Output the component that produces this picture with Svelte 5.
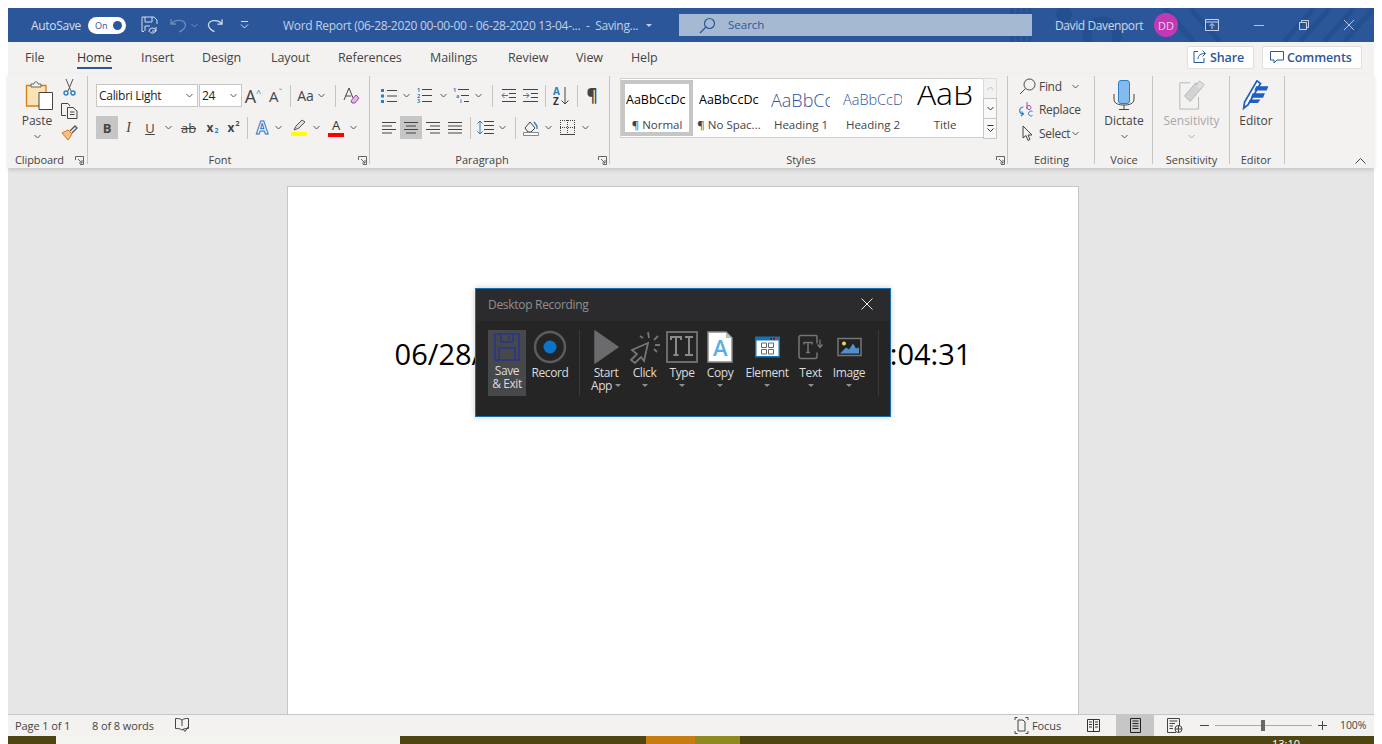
<script>
	const tabs = [
		{ name: 'File', w: 52 },
		{ name: 'Home', w: 64 },
		{ name: 'Insert', w: 61 },
		{ name: 'Design', w: 69 },
		{ name: 'Layout', w: 67 },
		{ name: 'References', w: 92 },
		{ name: 'Mailings', w: 78 },
		{ name: 'Review', w: 68 },
		{ name: 'View', w: 55 },
		{ name: 'Help', w: 40 }
	];
	const samples = [
		{ text: 'AaBbCcDc', name: '¶ Normal', kind: 'normal sel' },
		{ text: 'AaBbCcDc', name: '¶ No Spac...', kind: 'normal' },
		{ text: 'AaBbCc', name: 'Heading 1', kind: 'h1' },
		{ text: 'AaBbCcD', name: 'Heading 2', kind: 'h2' },
		{ text: 'AaB', name: 'Title', kind: 'title' }
	];
</script>

{#snippet chev(color = '#555')}
	<svg class="chev" width="7" height="5" viewBox="0 0 7 5"><path d="M.5 1 3.5 4 6.5 1" fill="none" stroke={color}/></svg>
{/snippet}

{#snippet launcher()}
	<svg class="launch" width="9" height="9" viewBox="0 0 9 9"><path d="M.5 4V.5H8.5V8.5H5M3 3 7 7M7 4V7H4" fill="none" stroke="#666"/></svg>
{/snippet}

{#snippet lines(kind)}
	<svg width="16" height="14" viewBox="0 0 16 14" fill="none" stroke="#444">
		{#if kind === 'left'}<path d="M1 1.5H15M1 5H11M1 8.5H15M1 12H11"/>
		{:else if kind === 'center'}<path d="M1 1.5H15M3 5H13M1 8.5H15M3 12H13"/>
		{:else if kind === 'right'}<path d="M1 1.5H15M5 5H15M1 8.5H15M5 12H15"/>
		{:else}<path d="M1 1.5H15M1 5H15M1 8.5H15M1 12H15"/>{/if}
	</svg>
{/snippet}

<div class="window">
	<header class="titlebar">
		<svg class="pattern" width="480" height="34" viewBox="0 0 480 34" fill="none" stroke="#24508f">
			<path d="M118 0V34M124 0V34M130 0V34M136 0V34" stroke-width="3"/>
			<circle cx="170" cy="6" r="8" fill="#24508f" stroke="none"/>
			<circle cx="208" cy="28" r="15" stroke-width="9"/>
			<path d="M270 0 300 34M296 0 326 34M390 34 420 0M406 34 436 0M430 34 460 0M450 34 480 0" stroke-width="5"/>
		</svg>
		<div class="qat">
			<span class="autosave">AutoSave</span>
			<span class="toggle"><b>On</b><i></i></span>
			<svg class="q-save" width="17" height="18" viewBox="0 0 17 18" fill="none" stroke="#d5deeb"><path d="M3 15.5H1V1H13L16 4V8M4 1V6H11V1M4 15V10H9M8 16a3.5 3.5 0 0 1 7-1M15 11V15H11M15 14a3.5 3.5 0 0 1-6 2"/></svg>
			<svg class="q-undo" width="17" height="16" viewBox="0 0 17 16" fill="none" stroke="#6d8cbc" stroke-width="1.3"><path d="M1 2V7H6M1.500 6.500C5 2 15 2 15.500 8 15.500 11 12 14 9 15"/></svg>
			<span class="q-c1">{@render chev('#6d8cbc')}</span>
			<svg class="q-redo" width="16" height="16" viewBox="0 0 17 16" fill="none" stroke="#d5deeb" stroke-width="1.3"><path d="M16 2V7H11M15.500 6.500C12 2 2 2 1.500 8 1.500 11 5 14 8 15"/></svg>
			<svg class="q-more" width="9" height="8" viewBox="0 0 9 8" fill="none" stroke="#d5deeb"><path d="M1 .5H8M1 3.500 4.500 7 8 3.500"/></svg>
			<span class="doc-title">Word Report (06-28-2020 00-00-00 - 06-28-2020 13-04-...&nbsp; -&nbsp; Saving...</span>
			<span class="title-caret"></span>
		</div>
		<div class="search">
			<svg width="17" height="17" viewBox="0 0 17 17" fill="none" stroke="#2b579a" stroke-width="1.2"><circle cx="10.500" cy="6.500" r="5"/><path d="M7 10 1 16"/></svg>
			<span>Search</span>
		</div>
		<div class="account">
			<span class="user">David Davenport</span>
			<span class="avatar">DD</span>
			<svg class="w-ribbon" width="14" height="12" viewBox="0 0 14 12" fill="none" stroke="#c6d2e4"><path d="M.5 .5H13.500V11.500H.5ZM.5 3H13.500M7 10V5M4.500 7 7 4.500 9.500 7"/></svg>
			<svg class="w-min" width="10" height="1" viewBox="0 0 10 1"><path d="M0 .5H10" stroke="#b5c4da"/></svg>
			<svg class="w-max" width="10" height="10" viewBox="0 0 10 10" fill="none" stroke="#c6d2e4"><path d="M.5 2.500H7.500V9.500H.5ZM2.500 2.500V.5H9.500V7.500H7.500"/></svg>
			<svg class="w-close" width="10" height="10" viewBox="0 0 10 10" fill="none" stroke="#b5c4da"><path d="M0 0 10 10M10 0 0 10"/></svg>
		</div>
	</header>

	<nav class="tabs">
		{#each tabs as tab}
			<span class="tab" style="width:{tab.w}px"><span class:active={tab.name === 'Home'}>{tab.name}</span></span>
		{/each}
		<span class="share-wrap">
			<span class="share">
				<svg width="14" height="14" viewBox="0 0 14 14" fill="none" stroke="#2b579a"><path d="M5 1.500H1V12.500H11V8M5 9C5 5 8 3.500 12 3.500M9.500 .5 12.500 3.500 9.500 6.500"/></svg>
				Share
			</span>
			<span class="share comments">
				<svg width="14" height="13" viewBox="0 0 14 13" fill="none" stroke="#2b579a"><path d="M.5 .5H13.500V9H7L4 12V9H.5Z"/></svg>
				Comments
			</span>
		</span>
	</nav>

	<section class="ribbon">
		<div class="g clipboard">
			<div class="g-body clip-body">
				<div class="big paste">
					<svg class="paste-icon" width="30" height="30" viewBox="0 0 30 30" fill="none">
						<path d="M1.500 5.500H21V26H1.500Z" fill="#fce3b5" stroke="#d67e1c" stroke-width="1.300"/>
						<path d="M6 7V4H9C9 1 13 1 13 4H16V7Z" fill="#f3f2f1" stroke="#666"/>
						<path d="M14 12.500H27.500V29.500H14Z" fill="#fff" stroke="#444"/>
					</svg>
					<span>Paste</span>
					{@render chev()}
				</div>
				<div class="clip-tools">
					<svg width="13" height="17" viewBox="0 0 13 17" fill="none"><path d="M3 0 8 12M10 0 5 12" stroke="#555"/><circle cx="3" cy="14" r="2" stroke="#2a7ec4" stroke-width="1.400"/><circle cx="10" cy="14" r="2" stroke="#2a7ec4" stroke-width="1.400"/></svg>
					<svg width="17" height="16" viewBox="0 0 17 16" fill="none" stroke="#444"><path d="M5 12.500H.5V.5H7L9 3M6.500 4.500H12L16 8V15.500H6.500ZM9 9H13.500M9 11.500H13.500"/></svg>
					<svg width="17" height="16" viewBox="0 0 17 16" fill="none"><path d="M1 8 7 15 11 9 7 5Z" fill="#f6c189" stroke="#d9741a"/><path d="M9 6 14 1 16 3 11 8" stroke="#555" stroke-width="1.300"/></svg>
				</div>
			</div>
			<div class="g-label">Clipboard</div>
			{@render launcher()}
		</div>

		<div class="g font">
			<div class="g-body">
				<div class="row">
					<span class="combo font-name">Calibri Light {@render chev()}</span>
					<span class="combo font-size">24 {@render chev()}</span>
					<span class="cell w22 glyph lg">A<sup>^</sup></span>
					<span class="cell w23 glyph md">A<sup class="blue">ˇ</sup></span>
					<span class="cell w6"><i class="vsep"></i></span>
					<span class="cell w25 glyph">Aa</span>
					<span class="cell w13 left">{@render chev()}</span>
					<span class="cell w8"><i class="vsep"></i></span>
					<span class="cell w25">
						<svg width="17" height="17" viewBox="0 0 17 17" fill="none"><path d="M1 13 6 1 10 11M2.500 9H8" stroke="#444"/><path d="M8 14 13 8 16 11 12 16H9Z" fill="#e6b8ea" stroke="#a23fb0"/></svg>
					</span>
				</div>
				<div class="row second">
					<span class="cell w22 on strong">B</span>
					<span class="cell w21 italic">I</span>
					<span class="cell w22 under">U</span>
					<span class="cell w15">{@render chev()}</span>
					<span class="cell w25 strike">ab</span>
					<span class="cell w23 strong small">x<sub>2</sub></span>
					<span class="cell w19 strong small">x<sup>2</sup></span>
					<span class="cell w8"><i class="vsep"></i></span>
					<span class="cell w22 effect">A</span>
					<span class="cell w10">{@render chev()}</span>
					<span class="cell w24 m4 marked">
						<svg width="16" height="12" viewBox="0 0 16 12" fill="none"><path d="M3 11 5 7 11 1 14 3 8 9Z" stroke="#555" fill="#ddd"/></svg>
						<i class="yellow"></i>
					</span>
					<span class="cell w10">{@render chev()}</span>
					<span class="cell w24 m3 marked colored">A<i class="red"></i></span>
					<span class="cell w10">{@render chev()}</span>
				</div>
			</div>
			<div class="g-label">Font</div>
			{@render launcher()}
		</div>

		<div class="g para">
			<div class="g-body">
				<div class="row">
					<span class="cell w18">
						<svg width="16" height="14" viewBox="0 0 16 14"><path d="M6 1.500H16M6 7H16M6 12.500H16" stroke="#444"/><path d="M0 0H3V3H0ZM0 5.500H3V8.500H0ZM0 11H3V14H0Z" fill="#2a7ec4"/></svg>
					</span>
					<span class="cell w16">{@render chev()}</span>
					<span class="cell w20">
						<svg class="mini" width="16" height="15" viewBox="0 0 16 15"><path d="M6 1.500H16M6 7.500H16M6 13.500H16" stroke="#444"/><text x="1" y="4">1</text><text x="1" y="9.500">2</text><text x="1" y="15">3</text></svg>
					</span>
					<span class="cell w18">{@render chev()}</span>
					<span class="cell w18">
						<svg class="mini" width="16" height="15" viewBox="0 0 16 15"><path d="M5 1.500H16M8 7.500H16M11 13.500H16" stroke="#444"/><text x="0" y="4">1</text><text x="3" y="9.500">a</text><text x="7" y="15">i</text></svg>
					</span>
					<span class="cell w16">{@render chev()}</span>
					<span class="cell w12"><i class="vsep"></i></span>
					<span class="cell w20">
						<svg width="15" height="13" viewBox="0 0 15 13" fill="none"><path d="M1 .5H15M8 4.500H15M8 8.500H15M1 12.500H15" stroke="#444"/><path d="M7 6.500H1M3.500 4 1 6.500 3.500 9" stroke="#2a7ec4"/></svg>
					</span>
					<span class="cell w24">
						<svg width="15" height="13" viewBox="0 0 15 13" fill="none"><path d="M0 .5H15M8 4.500H15M8 8.500H15M0 12.500H15" stroke="#444"/><path d="M0 6.500H6M3.500 4 6 6.500 3.500 9" stroke="#2a7ec4"/></svg>
					</span>
					<span class="cell w6"><i class="vsep"></i></span>
					<span class="cell w26 sort">
						<span><b class="az-a">A</b><b>Z</b></span>
						<svg width="8" height="18" viewBox="0 0 8 18" fill="none" stroke="#444"><path d="M4 0V17M.5 13.500 4 17 7.500 13.500"/></svg>
					</span>
					<span class="cell w6"><i class="vsep"></i></span>
					<span class="cell w24 pil">¶</span>
				</div>
				<div class="row second">
					<span class="cell w18">{@render lines('left')}</span>
					<span class="cell w22 on m2">{@render lines('center')}</span>
					<span class="cell w22">{@render lines('right')}</span>
					<span class="cell w22">{@render lines('just')}</span>
					<span class="cell w8"><i class="vsep"></i></span>
					<span class="cell w22">
						<svg width="17" height="15" viewBox="0 0 17 15" fill="none"><path d="M7 1.500H17M7 5.500H17M7 9.500H17M7 13.500H17" stroke="#444"/><path d="M3 1V14M.5 3.500 3 1 5.500 3.500M.5 11.500 3 14 5.500 11.500" stroke="#2a7ec4"/></svg>
					</span>
					<span class="cell w12">{@render chev()}</span>
					<span class="cell w14"><i class="vsep"></i></span>
					<span class="cell w18">
						<svg width="16" height="16" viewBox="0 0 16 16" fill="none"><path d="M2 8 7 2 12 8 8 12H5Z" stroke="#444"/><path d="M11 2 14 6V9" stroke="#2a7ec4" stroke-width="1.300"/><path d="M.5 12.500H15.500V15.500H.5Z" stroke="#888" fill="#fff"/></svg>
					</span>
					<span class="cell w16">{@render chev()}</span>
					<span class="cell w20 bord">
						<svg width="15" height="15" viewBox="0 0 15 15" fill="none" stroke="#444"><path d="M.5 0V15M14.500 0V15M7.500 0V15M0 .5H15M0 7.500H15" stroke-dasharray="1 1"/><path d="M0 14.500H15"/></svg>
					</span>
					<span class="cell w18">{@render chev()}</span>
				</div>
			</div>
			<div class="g-label">Paragraph</div>
			{@render launcher()}
		</div>

		<div class="g styles">
			<div class="g-body styles-body">
				<div class="gallery">
					{#each samples as s}
						<div class="style {s.kind}">
							<div class="sample">{s.text}</div>
							<div class="style-name">{s.name}</div>
						</div>
					{/each}
				</div>
				<div class="scroller">
					<span class="dim"><svg width="7" height="5" viewBox="0 0 7 5"><path d="M.5 4 3.500 1 6.500 4" fill="none" stroke="#bbb"/></svg></span>
					<span>{@render chev('#333')}</span>
					<span><svg width="7" height="8" viewBox="0 0 7 8" fill="none" stroke="#333"><path d="M.5 .5H6.500M.5 3.500 3.500 6.500 6.500 3.500"/></svg></span>
				</div>
			</div>
			<div class="g-label">Styles</div>
			{@render launcher()}
		</div>

		<div class="g editing">
			<div class="g-body edit-body">
				<div class="edit-row">
					<svg width="17" height="17" viewBox="0 0 17 17" fill="none" stroke="#444"><circle cx="10.500" cy="6.500" r="5.500"/><path d="M6.500 10.500 1 16"/></svg>
					<span>Find</span>
					<span class="find-chev">{@render chev()}</span>
				</div>
				<div class="edit-row">
					<svg width="17" height="17" viewBox="0 0 17 17" fill="none"><path d="M4.500 6A3.500 3.500 0 0 0 4 13M2.500 10.500 4.500 13 2 15" stroke="#2a7ec4" stroke-width="1.200"/><path d="M8 1V8M8 6.500a2 2 0 1 1 0 .1" stroke="#a23fb0"/><path d="M13.500 10.500a2.500 2.500 0 1 0 0 4" stroke="#2a7ec4"/></svg>
					<span>Replace</span>
				</div>
				<div class="edit-row">
					<svg width="13" height="17" viewBox="0 0 13 17" fill="none" stroke="#444"><path d="M2 1V13L5 10.500 7 15.500 9 14.500 7 10H11Z"/></svg>
					<span class="sel">Select</span>
					{@render chev()}
				</div>
			</div>
			<div class="g-label">Editing</div>
		</div>

		<div class="g voice">
			<div class="g-body">
				<div class="big">
					<svg width="22" height="30" viewBox="0 0 22 30" fill="none"><rect x="5.500" y=".5" width="11" height="23" rx="2.500" fill="#83bbee" stroke="#2a7ec4"/><path d="M1 14V19C1 24 6 25 11 25S21 24 21 19V14M11 25V29M6 29.500H16" stroke="#444"/></svg>
					<span>Dictate</span>
					{@render chev()}
				</div>
			</div>
			<div class="g-label">Voice</div>
		</div>

		<div class="g sens">
			<div class="g-body">
				<div class="big muted">
					<svg width="28" height="32" viewBox="0 0 28 32" fill="none" stroke="#b5b5b5"><path d="M1 3H12M1 3V31H21V18"/><path d="M6 17 18 3 24 9 12 23Z" fill="#d3d3d3"/><path d="M18 6 22 1 27 5 23 10" fill="#e0e0e0"/></svg>
					<span>Sensitivity</span>
					{@render chev('#aaa')}
				</div>
			</div>
			<div class="g-label">Sensitivity</div>
		</div>

		<div class="g editor">
			<div class="g-body">
				<div class="big">
					<svg width="31" height="34" viewBox="0 0 31 34" fill="none"><path d="M16 1 20 4 6 28 1 32 2 25Z" fill="#fff" stroke="#1f5fbf" stroke-width="2"/><path d="M15 7H29L27 12H13ZM11 15H25L23 20H9ZM8 22H20L17 26H6Z" fill="#1f5fbf"/></svg>
					<span>Editor</span>
				</div>
			</div>
			<div class="g-label">Editor</div>
		</div>

		<svg class="collapse" width="11" height="6" viewBox="0 0 11 6"><path d="M.5 5.500 5.500 .5 10.500 5.500" fill="none" stroke="#444"/></svg>
	</section>

	<main class="doc">
		<div class="page">
			<p>06/28/2020 00:00:00 - 06/28/2020 13:04:31</p>
		</div>
	</main>

	<footer class="status">
		<span class="st-page">Page 1 of 1</span>
		<span class="st-words">8 of 8 words</span>
		<svg class="st-proof" width="14" height="14" viewBox="0 0 14 14" fill="none" stroke="#444"><path d="M7 2C5 .5 3 .5 .5 .5V10.500C3 10.500 5 10.500 7 12 9 10.500 11 10.500 13.500 10.500V.5C11 .5 9 .5 7 2ZM7 2V8M8 11 10 13.500 13 9"/></svg>
		<span class="st-right">
			<svg class="st-focus" width="15" height="17" viewBox="0 0 15 17" fill="none" stroke="#444"><path d="M1 3V.5H3.500M11.500 .5H14V3M1 14V16.500H3.500M11.500 16.500H14V14M4 3H9L11 5V14H4Z"/></svg>
			<span class="st-focus-t">Focus</span>
			<svg class="st-read" width="13" height="13" viewBox="0 0 13 13" fill="none" stroke="#333"><path d="M.5 .5H12.500V12.500H.5ZM6.500 .5V12.500M2 3H5M2 5.500H5M2 8H5M8 3H11M8 5.500H11M8 8H11"/></svg>
			<span class="st-print">
				<svg width="11" height="15" viewBox="0 0 11 15" fill="none" stroke="#222"><path d="M.5 .5H10.500V14.500H.5ZM2.500 3H8.500M2.500 5.500H8.500M2.500 8H8.500M2.500 10.500H8.500"/></svg>
			</span>
			<svg class="st-web" width="16" height="15" viewBox="0 0 16 15" fill="none" stroke="#444"><path d="M9 14.500H.5V.5H12.500V8M2.500 3H10.500M2.500 5.500H8M2.500 8H6M2.500 10.500H6"/><circle cx="11.500" cy="11" r="3.500"/><path d="M8 11H15M11.500 7.500V14.500"/></svg>
			<svg class="st-minus" width="9" height="1" viewBox="0 0 9 1"><path d="M0 .5H9" stroke="#444"/></svg>
			<span class="slider"><i></i></span>
			<svg class="st-plus" width="9" height="9" viewBox="0 0 9 9"><path d="M0 4.500H9M4.500 0V9" stroke="#444"/></svg>
			<span class="st-zoom">100%</span>
		</span>
	</footer>

	<div class="taskbar">
		<span class="tb-search"></span>
		<span class="tb-run"></span>
		<span class="tb-run2"></span>
		<span class="tb-time">13:10</span>
	</div>

	<aside class="recorder">
		<div class="rec-head">
			<span>Desktop Recording</span>
			<svg width="12" height="12" viewBox="0 0 12 12"><path d="M.5 .5 11.500 11.500M11.500 .5 .5 11.500" stroke="#e8e8e8"/></svg>
		</div>
		<div class="rec-tools">
			<div class="tool save">
				<svg width="26" height="28" viewBox="0 0 26 28" fill="none" stroke="#27358c" stroke-width="1.500"><path d="M1 1H25V27H1ZM7 1V9H19V1M15 3V7M5 27V15H21V27"/></svg>
				<span>Save<br />&amp; Exit</span>
			</div>
			<div class="tool record">
				<svg width="34" height="34" viewBox="0 0 34 34"><circle cx="17" cy="17" r="15" fill="none" stroke="#5c5c5e" stroke-width="2.500"/><circle cx="17" cy="17" r="6.500" fill="#0a74c9"/></svg>
				<span>Record</span>
			</div>
			<i class="rec-sep"></i>
			<div class="tool start">
				<svg width="26" height="34" viewBox="0 0 26 34"><path d="M2 1 25 17 2 33Z" fill="#6b6b6d" stroke="#6b6b6d" stroke-width="1.500" stroke-linejoin="round"/></svg>
				<span>Start<br />App<i class="caret inline"></i></span>
			</div>
			<div class="tool click">
				<svg width="32" height="34" viewBox="0 0 32 34" fill="none" stroke="#757577" stroke-width="1.800"><path d="M19 13 3 20 8 24 2 30 6 33 12 27 15 31ZM20 8 19 2M25 10 29 6M26 15H31M25 19 28 22M14 8 11 6"/></svg>
				<span>Click</span><i class="caret"></i>
			</div>
			<div class="tool type">
				<svg width="32" height="32" viewBox="0 0 32 32" fill="none" stroke="#6b6b6d"><path d="M1 1H31V31H1Z" stroke-width="2"/><path d="M5 9V6H15V9M10 6V24M7.500 24H12.500M19 6H27M23 6V24M19 24H27" stroke="#8a8a8c" stroke-width="2"/></svg>
				<span>Type</span><i class="caret"></i>
			</div>
			<div class="tool copy">
				<svg width="26" height="32" viewBox="0 0 26 32"><path d="M1 1H19L25 7V31H1Z" fill="#fff" stroke="#8a8a8c" stroke-width="1.500"/><path d="M19 1V7H25Z" fill="#bdbdbd"/><text x="13" y="25" text-anchor="middle" class="copy-a">A</text></svg>
				<span>Copy</span><i class="caret"></i>
			</div>
			<div class="tool element">
				<svg width="25" height="21" viewBox="0 0 25 21"><path d="M0 0H25V21H0Z" fill="#1473b4"/><path d="M1.500 4H23.500V19.500H1.500Z" fill="#fff"/><path d="M6.500 6.500H11.500V11H6.500ZM13.500 6.500H18.500V11H13.500ZM6.500 13H11.500V17.500H6.500ZM13.500 13H18.500V17.500H13.500Z" fill="#fff" stroke="#666"/><path d="M15 1.500H17V3H15ZM18 1.500H20V3H18Z" fill="#333"/><path d="M21 1.500H23V3H21Z" fill="#d33"/></svg>
				<span>Element</span><i class="caret"></i>
			</div>
			<div class="tool text">
				<svg width="25" height="25" viewBox="0 0 25 25" fill="none" stroke="#757577" stroke-width="1.500"><path d="M19 9V2Q19 1 18 1H3Q1 1 1 3V22Q1 24 3 24H17Q19 24 19 22V18"/><path d="M6 10V8H14V10M10 8V18M8 18H12"/><path d="M22 5V12M19.500 10 22 13 24.500 10" stroke-width="1.300"/></svg>
				<span>Text</span><i class="caret"></i>
			</div>
			<div class="tool image">
				<svg width="25" height="19" viewBox="0 0 25 19"><path d="M1 1H24V18H1Z" fill="#222" stroke="#757577" stroke-width="1.500"/><path d="M3 16 9 10 12 12 16 6 19 11 22 10V16Z" fill="#4f8fcf"/><circle cx="7" cy="6" r="2" fill="#ecd76b"/></svg>
				<span>Image</span><i class="caret"></i>
			</div>
			<i class="rec-sep last"></i>
		</div>
	</aside>
</div>

<style>
	:global(body) {
		background: #fff;
		overflow: hidden;
	}

	.window {
		position: relative;
		margin: 8px 8px 0;
		height: 736px;
		display: flex;
		flex-direction: column;
		font-family: 'Open Sans', 'Noto Sans', sans-serif;
		font-size: 12px;
		color: #444;
	}

	/* title bar */
	.titlebar {
		position: relative;
		height: 34px;
		flex: none;
		display: flex;
		align-items: center;
		background: #2b579a;
		overflow: hidden;
	}

	.pattern {
		position: absolute;
		top: 0;
		right: 0;
	}

	.qat {
		position: relative;
		width: 671px;
		height: 100%;
		display: flex;
		align-items: center;
		padding-left: 23px;
		box-sizing: border-box;
		color: #d5deeb;
	}

	.autosave {
		width: 57px;
		font-size: 12px;
		letter-spacing: -0.3px;
	}

	.toggle {
		width: 38px;
		height: 17px;
		border-radius: 9px;
		background: #fff;
		display: flex;
		align-items: center;
		justify-content: space-between;
		padding: 0 4px 0 7px;
		box-sizing: border-box;
		color: #2b579a;
	}

	.toggle b {
		font-size: 9px;
		font-weight: 400;
	}

	.toggle i {
		width: 9px;
		height: 9px;
		border-radius: 50%;
		background: #2b579a;
	}

	.q-save {
		margin-left: 15px;
	}

	.q-undo {
		margin-left: 12px;
	}

	.q-c1 {
		margin-left: 4px;
		display: flex;
	}

	.q-redo {
		margin-left: 9px;
	}

	.q-more {
		margin-left: 17px;
	}

	.doc-title {
		margin-left: 34px;
		font-size: 12px;
		letter-spacing: -0.29px;
		white-space: nowrap;
		color: #c3d0e3;
	}

	.title-caret {
		margin-left: 8px;
		border: 3px solid transparent;
		border-top: 3px solid #c3d0e3;
		border-bottom: 0;
	}

	.search {
		position: relative;
		width: 353px;
		height: 22px;
		display: flex;
		align-items: center;
		padding-left: 20px;
		box-sizing: border-box;
		background: #a6b9d3;
		color: #2b579a;
		font-size: 11.500px;
	}

	.search span {
		margin-left: 12px;
		margin-top: -2px;
	}

	.account {
		position: relative;
		flex: 1;
		display: flex;
		align-items: center;
		padding-left: 23px;
		color: #cdd8e8;
	}

	.user {
		width: 99px;
		white-space: nowrap;
		letter-spacing: -0.4px;
	}

	.avatar {
		width: 24px;
		height: 24px;
		border-radius: 50%;
		background: #c239b3;
		color: #e9d6ec;
		display: flex;
		align-items: center;
		justify-content: center;
		font-size: 11px;
	}

	.w-ribbon {
		margin-left: 27px;
	}

	.w-min {
		margin-left: 35px;
	}

	.w-max {
		margin-left: 35px;
	}

	.w-close {
		margin-left: 35px;
	}

	/* tabs */
	.tabs {
		height: 32px;
		flex: none;
		box-sizing: border-box;
		display: flex;
		align-items: center;
		background: #f3f2f1;
		padding: 0 0 2px 17px;
		font-size: 12.500px;
		letter-spacing: -0.1px;
	}

	.tab {
		flex: none;
		white-space: nowrap;
	}

	.tab span {
		position: relative;
		display: inline-block;
	}

	.tab span.active {
		color: #333;
		font-weight: 500;
	}

	.tab span.active::after {
		content: '';
		position: absolute;
		left: 0;
		right: 0;
		bottom: -3px;
		height: 2px;
		background: #2b579a;
	}

	.share-wrap {
		margin-left: auto;
		margin-right: 12px;
		display: flex;
		gap: 8px;
	}

	.share {
		width: 67px;
		height: 23px;
		box-sizing: border-box;
		display: flex;
		align-items: center;
		gap: 3px;
		padding-left: 5px;
		background: #fff;
		border: 1px solid #e1dfdd;
		border-radius: 2px;
		color: #2b579a;
		font-weight: 600;
		font-size: 12.500px;
		letter-spacing: -0.1px;
	}

	.share.comments {
		width: 100px;
		padding-left: 7px;
	}

	/* ribbon */
	.ribbon {
		position: relative;
		z-index: 1;
		height: 94px;
		flex: none;
		display: flex;
		padding-top: 2px;
		box-sizing: border-box;
		background: #f3f2f1;
		box-shadow: 0 2px 4px rgba(0, 0, 0, 0.14);
	}

	.g {
		position: relative;
		height: 92px;
		flex: none;
		box-sizing: border-box;
		display: flex;
		flex-direction: column;
		background: linear-gradient(#c8c6c4, #c8c6c4) right top / 1px 88px no-repeat;
	}

	.g-body {
		height: 76px;
		flex: none;
	}

	.g-label {
		height: 16px;
		line-height: 16px;
		text-align: center;
		font-size: 11px;
		color: #444;
	}

	.launch {
		position: absolute;
		right: 3px;
		bottom: 3px;
	}

	.clipboard {
		width: 80px;
	}

	.clipboard .launch {
		right: 4px;
	}

	.clipboard .g-label {
		text-align: left;
		padding-left: 7px;
		letter-spacing: -0.1px;
	}

	.clip-body {
		display: flex;
		padding-left: 8px;
		box-sizing: border-box;
	}

	.big {
		display: flex;
		flex-direction: column;
		align-items: center;
		padding-top: 4px;
		height: 76px;
		box-sizing: border-box;
	}

	.big svg:first-child {
		height: 30px;
	}

	.big span {
		line-height: 16px;
		margin-top: 3px;
		white-space: nowrap;
	}

	.big .chev {
		margin-top: 5px;
	}

	.big.muted {
		color: #a8a8a8;
	}

	.paste {
		width: 42px;
	}

	.paste-icon {
		margin-left: 6px;
	}

	.clip-tools {
		width: 22px;
		display: flex;
		flex-direction: column;
		align-items: center;
		padding-top: 3px;
		gap: 6px;
	}

	.clip-tools svg:nth-child(2) {
		margin-top: 1px;
	}

	.font {
		width: 282px;
		padding-left: 8px;
	}

	.font .g-label,
	.para .g-label,
	.styles .g-label {
		padding-right: 26px;
	}

	.row {
		display: flex;
		align-items: center;
		height: 23px;
		margin-top: 8px;
	}

	.row.second {
		margin-top: 9px;
	}

	.combo {
		height: 23px;
		box-sizing: border-box;
		display: flex;
		align-items: center;
		justify-content: space-between;
		padding: 0 4px 0 2px;
		background: #fff;
		border: 1px solid #c8c6c4;
		color: #222;
		letter-spacing: -0.3px;
		white-space: nowrap;
	}

	.font-name {
		width: 102px;
	}

	.font-size {
		width: 43px;
		margin: 0 0 0 1px;
	}

	.cell {
		display: flex;
		align-items: center;
		justify-content: center;
		height: 23px;
		flex: none;
		position: relative;
	}

	.cell.left {
		justify-content: flex-start;
	}

	.w6 { width: 6px; }
	.w8 { width: 8px; }
	.w10 { width: 10px; }
	.w12 { width: 12px; }
	.w13 { width: 13px; }
	.w14 { width: 14px; }
	.w15 { width: 15px; }
	.w16 { width: 16px; }
	.w18 { width: 18px; }
	.w19 { width: 19px; }
	.w20 { width: 20px; }
	.w21 { width: 21px; }
	.w22 { width: 22px; }
	.w23 { width: 23px; }
	.w24 { width: 24px; }
	.w25 { width: 25px; }
	.w26 { width: 26px; }
	.m2 { margin-left: 2px; }
	.m3 { margin-left: 3px; }
	.m4 { margin-left: 4px; }

	.vsep {
		width: 1px;
		height: 22px;
		background: #c8c6c4;
	}

	.on {
		background: #c6c6c6;
	}

	.bord {
		padding-left: 3px;
		box-sizing: border-box;
	}

	.glyph {
		font-size: 14px;
		color: #444;
	}

	.glyph.lg {
		font-size: 18px;
	}

	.glyph.md {
		font-size: 15px;
	}

	.glyph sup {
		font-size: 9px;
		line-height: 0;
		color: #2a7ec4;
		margin-bottom: 6px;
	}

	.strong {
		font-weight: 700;
		font-size: 13px;
		color: #444;
	}

	.strong.small {
		font-size: 12px;
	}

	.strong sub,
	.strong sup {
		font-size: 7px;
		line-height: 0;
		color: #2a7ec4;
		font-weight: 700;
	}

	.strong sub {
		margin-top: 7px;
		margin-left: 1px;
	}

	.strong sup {
		color: #444;
		margin-bottom: 7px;
		margin-left: 1px;
	}

	.italic {
		font-family: 'Liberation Serif', serif;
		font-style: italic;
		font-size: 14px;
	}

	.under {
		text-decoration: underline;
		font-size: 13px;
	}

	.strike {
		text-decoration: line-through;
		font-size: 13px;
	}

	.effect {
		font-size: 17px;
		font-weight: 700;
		color: #fff;
		-webkit-text-stroke: 1px #1f78c8;
	}

	.marked {
		flex-direction: column;
		justify-content: flex-start;
		padding-top: 3px;
		box-sizing: border-box;
	}

	.colored {
		font-size: 13px;
		line-height: 13px;
		color: #333;
	}

	.yellow,
	.red {
		width: 16px;
		height: 4px;
		margin-top: 1px;
		background: #ffff00;
	}

	.red {
		background: #ff0000;
	}

	.para {
		width: 240px;
		padding-left: 10px;
	}

	.mini {
		overflow: visible;
	}

	.mini text {
		font-size: 5.500px;
		font-weight: 700;
		fill: #2a7ec4;
	}

	.sort {
		gap: 1px;
	}

	.sort span {
		display: flex;
		flex-direction: column;
		font-size: 10px;
		line-height: 10px;
		color: #333;
	}

	.sort b {
		font-weight: 700;
	}

	.az-a {
		color: #2a7ec4;
	}

	.pil {
		font-size: 17px;
		font-weight: 700;
		color: #444;
	}

	/* styles gallery */
	.styles {
		width: 398px;
		padding-left: 10px;
	}

	.styles-body {
		display: flex;
		padding-top: 2px;
		box-sizing: border-box;
	}

	.gallery {
		width: 363px;
		height: 60px;
		box-sizing: border-box;
		display: flex;
		background: #fff;
		border: 1px solid #d2d0ce;
		border-right: 0;
		overflow: hidden;
	}

	.style {
		width: 72px;
		height: 58px;
		flex: none;
		box-sizing: border-box;
		padding-top: 9px;
		text-align: center;
		overflow: hidden;
		color: #444;
		font-size: 11.500px;
	}

	.style.sel {
		width: 72px;
		height: 56px;
		margin: 1px 0 1px 0;
		border: 4px solid #c6c6c6;
		padding: 4px 1px 0;
	}

	.sample {
		height: 24px;
		line-height: 24px;
		white-space: nowrap;
		overflow: hidden;
		color: #000;
		font-size: 12.500px;
		margin: 0 6px;
		text-align: left;
	}

	.style.sel .sample {
		margin: 0;
	}

	.h1 .sample {
		font-size: 18px;
		font-weight: 300;
		color: #2f5496;
		margin: 0 7px 0 6px;
	}

	.h2 .sample {
		font-size: 14.500px;
		font-weight: 300;
		color: #2f5496;
		margin: 0 7px 0 6px;
	}

	.style.title {
		padding-top: 7px;
	}

	.title .sample {
		font-size: 32px;
		line-height: 13px;
		height: 22px;
		margin: 0;
		text-align: center;
		font-weight: 300;
	}

	.style-name {
		margin-top: 5px;
		line-height: 16px;
		white-space: nowrap;
	}

	.title .style-name {
		margin-top: 9px;
	}

	.scroller {
		display: flex;
		flex-direction: column;
		width: 14px;
		height: 60px;
	}

	.scroller span {
		flex: 1;
		display: flex;
		align-items: center;
		justify-content: center;
		border: 1px solid #c8c6c4;
		background: #f8f8f8;
		margin-bottom: -1px;
	}

	.scroller .dim {
		background: #f3f2f1;
		border-color: #dcdcdc;
	}

	/* editing */
	.editing {
		width: 87px;
	}

	.edit-body {
		margin-top: -1px;
		padding-left: 11px;
		box-sizing: border-box;
		display: flex;
		flex-direction: column;
		gap: 1px;
		letter-spacing: -0.3px;
	}

	.editing .g-label {
		margin-top: 1px;
	}

	.edit-row {
		height: 22.500px;
		display: flex;
		align-items: center;
		gap: 3px;
		white-space: nowrap;
	}

	.edit-row svg:first-child {
		width: 17px;
	}

	.edit-row span.sel {
		margin-right: -1px;
	}

	.find-chev {
		display: flex;
		margin-left: 2px;
	}

	.voice {
		width: 58px;
	}

	.sens {
		width: 77px;
	}

	.editor {
		width: 55px;
		padding-right: 3px;
	}

	.voice .big,
	.sens .big,
	.editor .big {
		width: 100%;
	}

	.collapse {
		position: absolute;
		right: 8px;
		bottom: 4px;
	}

	/* document */
	.doc {
		flex: 1;
		min-height: 0;
		display: flex;
		justify-content: center;
		background: #e6e6e6;
		padding: 18px 16px 0 0;
		overflow: hidden;
	}

	.page {
		width: 792px;
		flex: none;
		height: 600px;
		box-sizing: border-box;
		background: #fff;
		border: 1px solid #c8c6c4;
		text-align: center;
		padding-top: 147px;
	}

	.page p {
		margin: 0;
		font-size: 29px;
		line-height: 40px;
		color: #000;
		white-space: nowrap;
	}

	/* status bar */
	.status {
		height: 22px;
		flex: none;
		box-sizing: border-box;
		display: flex;
		align-items: center;
		padding-bottom: 1px;
		background: #f3f2f1;
		border-top: 1px solid #c8c6c4;
		font-size: 11px;
		letter-spacing: -0.1px;
		color: #444;
		position: relative;
		z-index: 1;
	}

	.st-page {
		margin-left: 7px;
		width: 77px;
	}

	.st-words {
		width: 83px;
	}

	.st-right {
		margin-left: auto;
		display: flex;
		align-items: center;
		height: 100%;
		padding-right: 7px;
	}

	.st-focus-t {
		margin-left: 3px;
		width: 55px;
		font-size: 11px;
	}

	.st-print {
		margin-left: 16px;
		width: 38px;
		height: calc(100% + 1px);
		background: #c6c6c6;
		display: flex;
		align-items: center;
		justify-content: center;
	}

	.st-web {
		margin-left: 13px;
	}

	.st-minus {
		margin-left: 17px;
	}

	.slider {
		width: 97px;
		height: 1px;
		margin-left: 6px;
		background: #a8a8a8;
		position: relative;
	}

	.slider i {
		position: absolute;
		left: 46px;
		top: -5px;
		width: 4px;
		height: 11px;
		background: #666;
	}

	.st-plus {
		margin-left: 6px;
	}

	.st-zoom {
		margin-left: 13px;
		width: 27px;
		font-size: 10.500px;
	}

	/* taskbar strip */
	.taskbar {
		height: 8px;
		flex: none;
		display: flex;
		background: #4f4510;
		overflow: hidden;
		position: relative;
	}

	.tb-search {
		width: 344px;
		margin-left: 48px;
		background: #f5f5f0;
	}

	.tb-run {
		width: 49px;
		margin-left: 246px;
		background: #c77c10;
	}

	.tb-run2 {
		width: 45px;
		background: #8e8a20;
	}

	.tb-time {
		margin-left: auto;
		margin-right: 74px;
		color: #fff;
		font-size: 11px;
		line-height: 14px;
		margin-top: 1px;
	}

	/* recorder floating over the document */
	.recorder {
		position: absolute;
		z-index: 2;
		left: 467px;
		top: 280px;
		width: 416px;
		height: 129px;
		box-sizing: border-box;
		background: #252526;
		border: 1px solid #1a6db0;
		color: #dcdcdc;
		box-shadow: 0 0 6px rgba(0, 0, 0, 0.2);
	}

	.rec-head {
		height: 32px;
		display: flex;
		align-items: center;
		justify-content: space-between;
		padding: 0 17px 2px 12px;
		box-sizing: border-box;
		background: #2b2b2d;
		color: #8f8f8f;
		font-size: 12px;
		letter-spacing: -0.3px;
	}

	.rec-tools {
		display: flex;
		padding: 9px 0 0 12px;
		font-size: 12px;
		letter-spacing: -0.4px;
	}

	.tool {
		display: flex;
		flex-direction: column;
		align-items: center;
		text-align: center;
		line-height: 13px;
		height: 66px;
		flex: none;
		position: relative;
	}

	.tool svg {
		height: 34px;
		flex: none;
		margin-bottom: 2px;
	}

	.tool.save {
		width: 38px;
		background: #46484c;
	}

	.tool.save svg {
		margin: 3px 0 0;
		height: 28px;
	}

	.tool.save span {
		margin-top: 3px;
	}

	.record {
		width: 48px;
	}

	.start {
		width: 40px;
	}

	.click {
		width: 37px;
	}

	.type {
		width: 38px;
	}

	.copy {
		width: 38px;
	}

	.element {
		width: 56px;
	}

	.text {
		width: 31px;
	}

	.image {
		width: 46px;
	}

	.rec-sep {
		width: 1px;
		height: 66px;
		margin: 0 6px 0 5px;
		flex: none;
		background: #3a3a3c;
	}

	.rec-sep.last {
		margin-left: 6px;
	}

	.caret {
		width: 0;
		height: 0;
		margin-top: 5px;
		border: 3px solid transparent;
		border-top: 3px solid #8f8f8f;
		border-bottom: 0;
	}

	.caret.inline {
		display: inline-block;
		margin: 0 0 2px 3px;
		vertical-align: middle;
	}

	.copy-a {
		font-family: 'Open Sans', sans-serif;
		font-size: 22px;
		fill: #5aaee6;
		font-weight: 600;
	}
</style>
